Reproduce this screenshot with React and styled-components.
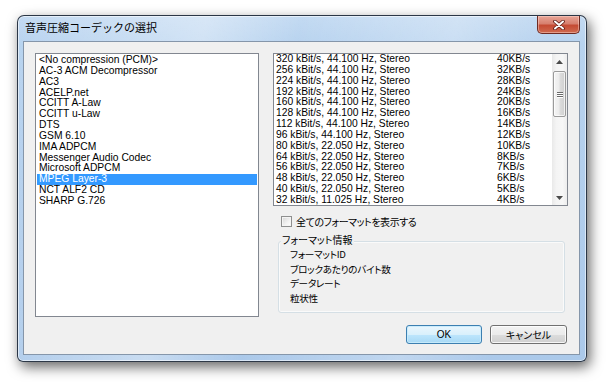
import React from 'react';
import styled, { createGlobalStyle } from 'styled-components';

const GlobalStyle = createGlobalStyle`
  html, body { margin: 0; padding: 0; background: #fff; }
  body { font-family: "Liberation Sans", Arial, sans-serif; }
`;

const JP = `"Noto Sans CJK JP", "Noto Sans", sans-serif`;

const Page = styled.div`
  width: 606px;
  height: 382px;
  box-sizing: border-box;
  padding: 15px 0 0 17px;
  overflow: hidden;
  background: #fff;
`;

const Window = styled.div`
  width: 570px;
  height: 347px;
  box-sizing: border-box;
  border: 1px solid rgba(28, 38, 52, 0.9);
  border-radius: 7px 7px 6px 6px;
  background:
    linear-gradient(100deg, rgba(255,255,255,0) 0%, rgba(255,255,255,0.35) 30%, rgba(255,255,255,0) 45%, rgba(255,255,255,0.25) 70%, rgba(255,255,255,0) 85%),
    linear-gradient(to bottom, #c3daf2 0%, #b8d3ef 8%, #abc9ea 100%);
  box-shadow: inset 0 0 0 1px rgba(255, 255, 255, 0.55), 3px 5px 13px rgba(0, 0, 0, 0.6);
  display: flex;
  flex-direction: column;
  padding: 0 6px 6px 5px;
`;

const TitleBar = styled.div`
  height: 25px;
  display: flex;
  align-items: flex-start;
`;

const Title = styled.div`
  margin-top: 4px;
  padding-left: 2px;
  font-family: ${JP};
  font-size: 11px;
  line-height: 15px;
  color: #000;
`;

const CloseButton = styled.div`
  margin-left: auto;
  width: 43px;
  height: 18px;
  box-sizing: border-box;
  border: 1px solid #6e2a22;
  border-top: none;
  border-radius: 0 0 5px 5px;
  background: linear-gradient(to bottom, #e8a597 0%, #d7806f 45%, #c54b34 55%, #cf6a4f 100%);
  box-shadow: inset 0 0 0 1px rgba(255, 220, 210, 0.45);
  display: flex;
  align-items: center;
  justify-content: center;
`;

const Client = styled.div`
  flex: 1;
  box-sizing: border-box;
  border: 1px solid #8596aa;
  background: #f0f0f0;
  display: grid;
  grid-template-columns: 224px 295px;
  grid-template-rows: 264px 19px;
  column-gap: 14px;
  row-gap: 8px;
  padding: 11px 11px 10px 11px;
`;

const ListBox = styled.div`
  box-sizing: border-box;
  border: 1px solid #828790;
  background: #fff;
  padding: 1px;
  overflow: hidden;
`;

const ListItem = styled.div`
  height: 10.85px;
  line-height: 10.85px;
  padding-left: 2px;
  font-size: 10.3px;
  white-space: nowrap;
  color: ${(p) => (p.$selected ? '#fff' : '#000')};
  background: ${(p) => (p.$selected ? '#3399ff' : 'transparent')};
`;

const RightColumn = styled.div`
  display: flex;
  flex-direction: column;
`;

const FormatList = styled.div`
  height: 153px;
  box-sizing: border-box;
  border: 1px solid #828790;
  background: #fff;
  display: flex;
`;

const FormatRows = styled.div`
  flex: 1;
  padding: 0 0 0 2px;
  overflow: hidden;
`;

const FormatRow = styled.div`
  display: grid;
  grid-template-columns: 221px auto;
  height: 10.85px;
  line-height: 10.85px;
  font-size: 10.3px;
  white-space: nowrap;
  color: #000;
`;

const ScrollBar = styled.div`
  width: 15px;
  display: flex;
  flex-direction: column;
  background: linear-gradient(to right, #e9e9e9 0%, #f4f4f4 30%, #f7f7f7 70%, #ededed 100%);
`;

const ScrollArrow = styled.div`
  height: 15px;
  display: flex;
  align-items: center;
  justify-content: center;
`;

const Thumb = styled.div`
  height: 46px;
  margin: 2px 1px 0 1px;
  box-sizing: border-box;
  border: 1px solid #9a9a9a;
  border-radius: 2px;
  background: linear-gradient(to right, #f4f4f4 0%, #ececec 45%, #dcdcdc 55%, #cfcfcf 100%);
  box-shadow: inset 0 0 0 1px rgba(255, 255, 255, 0.7);
  display: flex;
  flex-direction: column;
  align-items: center;
  justify-content: center;
  gap: 1px;
`;

const Grip = styled.div`
  width: 6px;
  height: 1px;
  background: #6a6a6a;
  box-shadow: 0 1px 0 #fff;
`;

const TrackSpacer = styled.div`
  flex: 1;
`;

const CheckRow = styled.div`
  margin-top: 10px;
  height: 11px;
  display: flex;
  align-items: center;
  padding-left: 8px;
  gap: 4px;
`;

const CheckBox = styled.div`
  width: 11px;
  height: 11px;
  box-sizing: border-box;
  border: 1px solid #8e8f8f;
  background: linear-gradient(135deg, #d6d6d6 0%, #f2f2f2 60%, #ffffff 100%);
  box-shadow: inset 0 0 0 1px #f4f4f4;
`;

const CheckLabel = styled.span`
  font-family: ${JP};
  font-size: 10px;
  line-height: 11px;
  letter-spacing: -0.45px;
  font-feature-settings: "palt";
  color: #000;
  white-space: nowrap;
`;

const GroupBox = styled.div`
  position: relative;
  margin: 14px 3px 0 5px;
  height: 72px;
  box-sizing: border-box;
  border: 1px solid #d5dfe5;
  border-radius: 3px;
  box-shadow: inset 0 0 0 1px #fafafa;
  padding: 5px 0 0 11px;
`;

const GroupTitle = styled.span`
  position: absolute;
  top: -8px;
  left: 2px;
  padding: 0 1px;
  background: #f0f0f0;
  font-family: ${JP};
  font-size: 10px;
  line-height: 12px;
  font-feature-settings: "palt";
  color: #000;
`;

const GroupItem = styled.div`
  font-family: ${JP};
  font-size: 9.6px;
  line-height: 14.5px;
  letter-spacing: -0.3px;
  font-feature-settings: "palt";
  color: #000;
  white-space: nowrap;
`;

const ButtonRow = styled.div`
  grid-column: 1 / -1;
  display: flex;
  justify-content: flex-end;
  gap: 8px;
  padding-right: 1px;
`;

const Button = styled.div`
  width: ${(p) => p.$w}px;
  height: 19px;
  box-sizing: border-box;
  border-radius: 3px;
  border: 1px solid ${(p) => (p.$default ? '#3c7fb1' : '#707070')};
  background: ${(p) =>
    p.$default
      ? 'linear-gradient(to bottom, #eaf6fd 0%, #d9f0fc 50%, #bee6fd 50%, #a7d9f5 100%)'
      : 'linear-gradient(to bottom, #f2f2f2 0%, #ebebeb 50%, #dddddd 50%, #cfcfcf 100%)'};
  box-shadow: inset 0 0 0 1px ${(p) => (p.$default ? 'rgba(200, 235, 252, 0.9)' : 'rgba(255, 255, 255, 0.8)')};
  display: flex;
  align-items: center;
  justify-content: center;
  font-family: "Liberation Sans", ${JP};
  font-size: 10px;
  font-feature-settings: "palt";
  color: #000;
`;

const codecs = [
  '<No compression (PCM)>',
  'AC-3 ACM Decompressor',
  'AC3',
  'ACELP.net',
  'CCITT A-Law',
  'CCITT u-Law',
  'DTS',
  'GSM 6.10',
  'IMA ADPCM',
  'Messenger Audio Codec',
  'Microsoft ADPCM',
  'MPEG Layer-3',
  'NCT ALF2 CD',
  'SHARP G.726',
];

const formats = [
  ['320 kBit/s, 44.100 Hz, Stereo', '40KB/s'],
  ['256 kBit/s, 44.100 Hz, Stereo', '32KB/s'],
  ['224 kBit/s, 44.100 Hz, Stereo', '28KB/s'],
  ['192 kBit/s, 44.100 Hz, Stereo', '24KB/s'],
  ['160 kBit/s, 44.100 Hz, Stereo', '20KB/s'],
  ['128 kBit/s, 44.100 Hz, Stereo', '16KB/s'],
  ['112 kBit/s, 44.100 Hz, Stereo', '14KB/s'],
  ['96 kBit/s, 44.100 Hz, Stereo', '12KB/s'],
  ['80 kBit/s, 22.050 Hz, Stereo', '10KB/s'],
  ['64 kBit/s, 22.050 Hz, Stereo', '8KB/s'],
  ['56 kBit/s, 22.050 Hz, Stereo', '7KB/s'],
  ['48 kBit/s, 22.050 Hz, Stereo', '6KB/s'],
  ['40 kBit/s, 22.050 Hz, Stereo', '5KB/s'],
  ['32 kBit/s, 11.025 Hz, Stereo', '4KB/s'],
];

const info = ['フォーマットID', 'ブロックあたりのバイト数', 'データレート', '粒状性'];

const CloseGlyph = () => (
  <svg width="12" height="10" viewBox="0 0 12 10">
    <path d="M2 1.5 L10 8.5 M10 1.5 L2 8.5" stroke="#5a1a12" strokeWidth="3.6" strokeLinecap="round" />
    <path d="M2 1.5 L10 8.5 M10 1.5 L2 8.5" stroke="#ffffff" strokeWidth="2" strokeLinecap="round" />
  </svg>
);

const Arrow = ({ up }) => (
  <svg width="7" height="4" viewBox="0 0 7 4">
    <path d={up ? 'M0 4 L3.5 0 L7 4 Z' : 'M0 0 L3.5 4 L7 0 Z'} fill="#4a4a4a" />
  </svg>
);

export default function App() {
  return (
    <Page>
      <GlobalStyle />
      <Window>
        <TitleBar>
          <Title>音声圧縮コーデックの選択</Title>
          <CloseButton>
            <CloseGlyph />
          </CloseButton>
        </TitleBar>
        <Client>
          <ListBox>
            {codecs.map((c) => (
              <ListItem key={c} $selected={c === 'MPEG Layer-3'}>
                {c}
              </ListItem>
            ))}
          </ListBox>
          <RightColumn>
            <FormatList>
              <FormatRows>
                {formats.map(([a, b]) => (
                  <FormatRow key={a}>
                    <span>{a}</span>
                    <span>{b}</span>
                  </FormatRow>
                ))}
              </FormatRows>
              <ScrollBar>
                <ScrollArrow>
                  <Arrow up />
                </ScrollArrow>
                <Thumb>
                  <Grip />
                  <Grip />
                  <Grip />
                </Thumb>
                <TrackSpacer />
                <ScrollArrow>
                  <Arrow />
                </ScrollArrow>
              </ScrollBar>
            </FormatList>
            <CheckRow>
              <CheckBox />
              <CheckLabel>全てのフォーマットを表示する</CheckLabel>
            </CheckRow>
            <GroupBox>
              <GroupTitle>フォーマット情報</GroupTitle>
              {info.map((t) => (
                <GroupItem key={t}>{t}</GroupItem>
              ))}
            </GroupBox>
          </RightColumn>
          <ButtonRow>
            <Button $w={76} $default>OK</Button>
            <Button $w={77}>キャンセル</Button>
          </ButtonRow>
        </Client>
      </Window>
    </Page>
  );
}
